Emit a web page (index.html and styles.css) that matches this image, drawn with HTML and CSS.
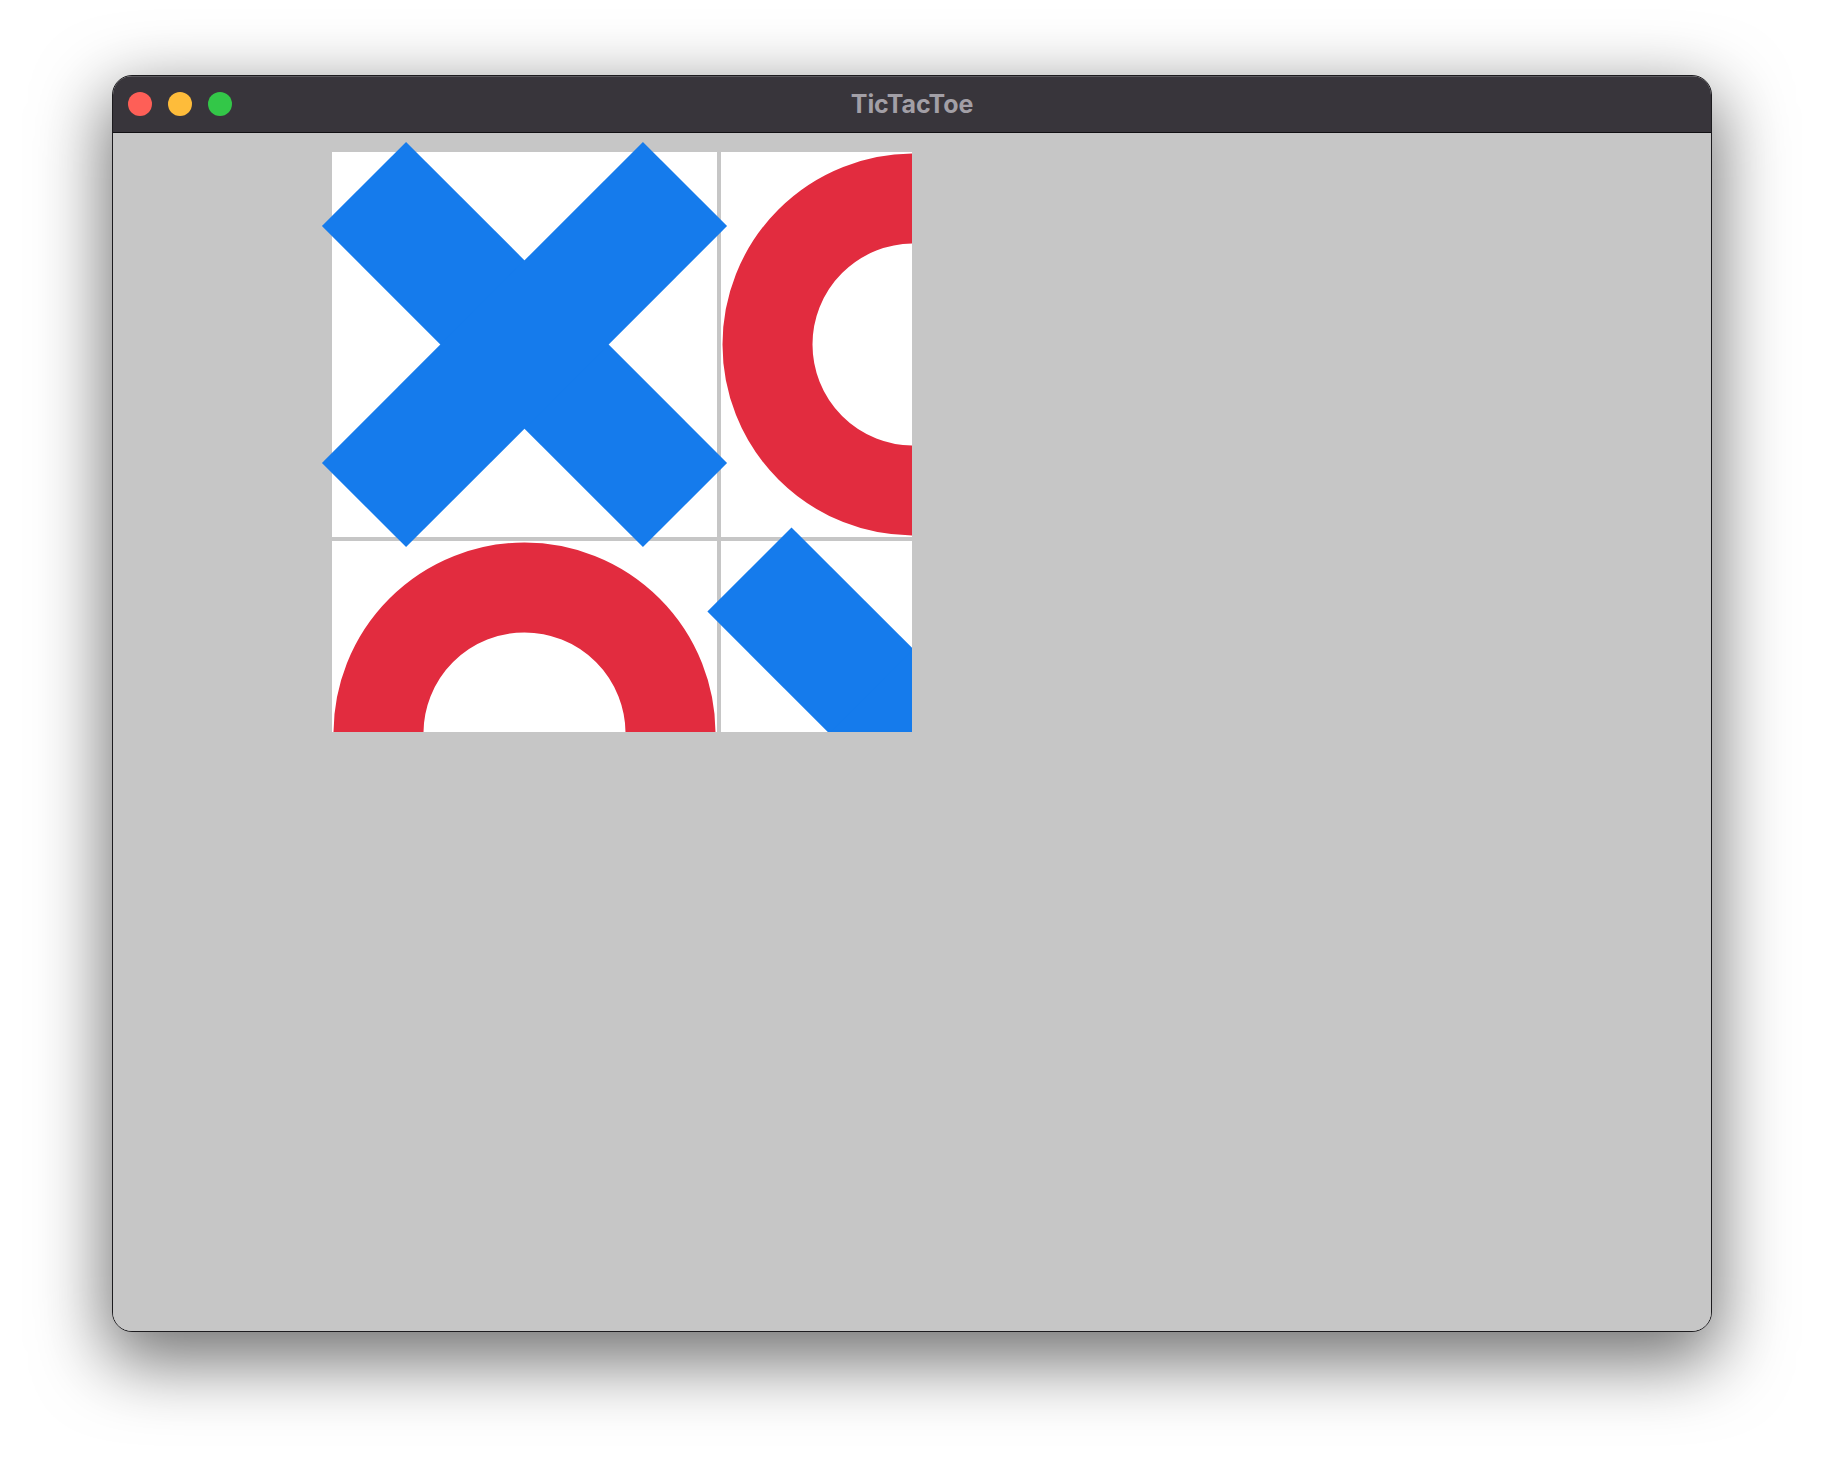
FILE: index.html
```html
<!DOCTYPE html>
<html>
<head>
<meta charset="utf-8">
<title>TicTacToe</title>
<link rel="stylesheet" href="styles.css">
</head>
<body>
<div class="window">
  <div class="titlebar">
    <div class="lights">
      <span class="light red"></span>
      <span class="light yellow"></span>
      <span class="light green"></span>
    </div>
    <div class="title">TicTacToe</div>
  </div>
  <div class="content">
    <div class="board">
      <div class="line vline"></div>
      <div class="line hline"></div>
      <div class="cells">
        <div class="cell">
          <svg class="mark" viewBox="0 0 385 385" width="385" height="385">
            <rect x="-34.5" y="133" width="454" height="119" transform="rotate(45 192.5 192.5)"/>
            <rect x="-34.5" y="133" width="454" height="119" transform="rotate(-45 192.5 192.5)"/>
          </svg>
        </div>
        <div class="cell">
          <svg class="mark" viewBox="0 0 385 385" width="385" height="385">
            <circle class="o" cx="192.5" cy="192.5" r="146"/>
          </svg>
        </div>
        <div class="cell"></div>
        <div class="cell">
          <svg class="mark" viewBox="0 0 385 385" width="385" height="385">
            <circle class="o" cx="192.5" cy="192.5" r="146"/>
          </svg>
        </div>
        <div class="cell">
          <svg class="mark" viewBox="0 0 385 385" width="385" height="385">
            <rect x="-39.5" y="133" width="464" height="119" transform="rotate(45 192.5 192.5)"/>
            <rect x="-39.5" y="133" width="464" height="119" transform="rotate(-45 192.5 192.5)"/>
          </svg>
        </div>
        <div class="cell"></div>
        <div class="cell"></div>
        <div class="cell"></div>
        <div class="cell"></div>
      </div>
    </div>
  </div>
</div>
</body>
</html>
```
FILE: styles.css
```css
html, body {
  margin: 0;
  padding: 0;
  background: #ffffff;
}
body {
  padding: 75px 0 0 112px;
  width: 1824px;
  height: 1480px;
  box-sizing: border-box;
  overflow: hidden;
}
.window {
  width: 1600px;
  height: 1257px;
  box-sizing: border-box;
  border: 1px solid #1c1b1e;
  border-radius: 20px;
  overflow: hidden;
  display: flex;
  flex-direction: column;
  background: #c6c6c6;
  box-shadow: 0 24px 70px 6px rgba(0, 0, 0, 0.55);
}
.titlebar {
  height: 57px;
  flex: none;
  box-sizing: border-box;
  background: #38353b;
  border-bottom: 1px solid #111013;
  box-shadow: inset 0 1px 0 rgba(255, 255, 255, 0.18);
  display: flex;
  align-items: center;
  justify-content: center;
  position: relative;
}
.lights {
  position: absolute;
  left: 15px;
  top: 16px;
  display: flex;
  gap: 16px;
}
.light {
  width: 24px;
  height: 24px;
  border-radius: 50%;
  display: block;
}
.red { background: #fe5f57; }
.yellow { background: #febc3a; }
.green { background: #33c748; }
.title {
  font-family: Inter, "Liberation Sans", sans-serif;
  font-weight: 700;
  font-size: 25px;
  color: #a29fa6;
  letter-spacing: -0.1px;
  margin-top: -1px;
}
.content {
  flex: 1;
  background: #c6c6c6;
  padding: 19px 0 0 219px;
}
.board {
  width: 580px;
  height: 580px;
  background: #ffffff;
  position: relative;
  clip-path: inset(-40px 0 0 -40px);
}
.cells {
  position: relative;
  display: grid;
  grid-template-columns: 385px 385px 385px;
  grid-template-rows: 385px 385px 385px;
  gap: 4px;
  width: 1163px;
}
.cell {
  width: 385px;
  height: 385px;
}
.mark {
  display: block;
  overflow: visible;
  fill: #157bec;
}
.mark .o {
  fill: none;
  stroke: #e22c3f;
  stroke-width: 90;
}
.line {
  position: absolute;
  background: #c6c6c6;
}
.vline {
  left: 385px;
  top: 0;
  width: 4px;
  height: 100%;
}
.hline {
  top: 385px;
  left: 0;
  height: 4px;
  width: 100%;
}
```
